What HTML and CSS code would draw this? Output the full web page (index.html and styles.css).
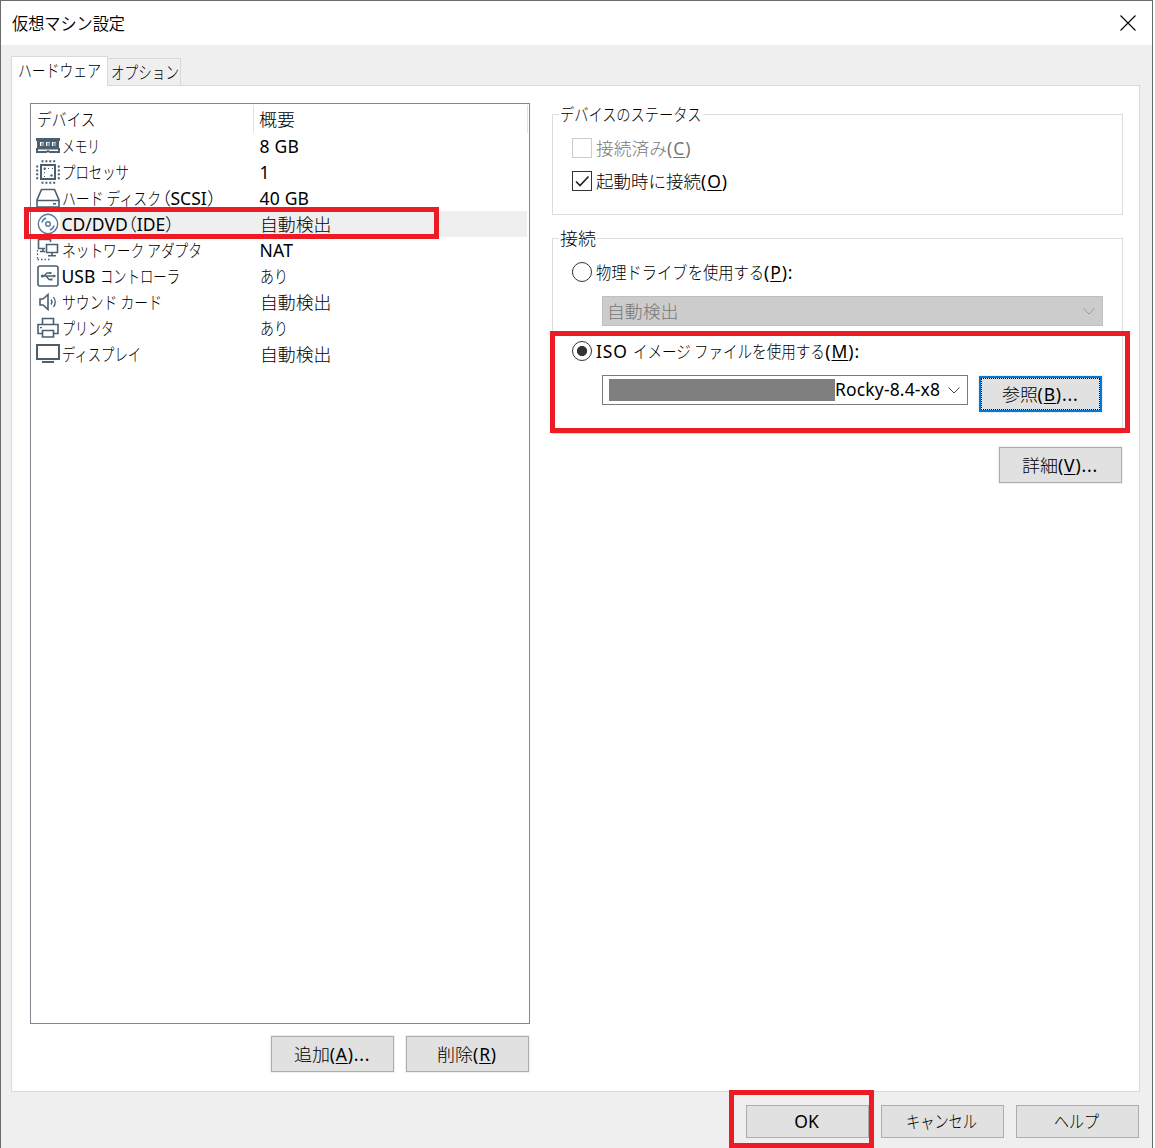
FILE: index.html
```html
<!DOCTYPE html>
<html lang="ja">
<head>
<meta charset="utf-8">
<title>仮想マシン設定</title>
<link rel="stylesheet" href="styles.css">
</head>
<body>
<div class="window">
  <header class="titlebar">
    <h1><span class="fit t-title">仮想マシン設定</span></h1>
    <svg class="close" width="16" height="16" viewBox="0 0 16 16"><path d="M.5 .5l15 15M15.5 .5l-15 15"/></svg>
  </header>

  <nav class="tabs">
    <div class="tab active"><span class="fit t-hw">ハードウェア</span></div>
    <div class="tab"><span class="fit t-opt">オプション</span></div>
  </nav>

  <main class="panel">
    <section class="left">
      <div class="list">
        <div class="row head"><span class="name"><span class="fit t-device">デバイス</span></span><span class="summary"><span class="fit t-two">概要</span></span></div>
        <div class="row">
          <svg class="icon" viewBox="0 0 24 24"><path class="solid" d="M0 4h24v3h-1v7h1v5H0v-5h1V7H0z"/><path class="cut" d="M2 15.500h20V17h-8l-2-1-2 1H2zM4 8h4v4H4zM10 8h4v4h-4zM16 8h4v4h-4zM10.500 19l1.500-1 1.500 1z"/><path class="gray" d="M5 8.500h3V12H5zM11 8.500h3V12h-3zM17 8.500h3V12h-3z"/></svg>
          <span class="name"><span class="fit t-mem">メモリ</span></span><span class="summary">8 GB</span>
        </div>
        <div class="row">
          <svg class="icon" viewBox="0 0 24 24"><path class="line" d="M5 5h14v14H5z"/><path class="dash" d="M5.500 1.200h14M5.500 22.800h14M1.200 5.500v14M22.800 5.500v14"/><circle class="solid" cx="8.700" cy="8.700" r="1.200"/><circle class="solid" cx="15.500" cy="15.500" r="1.200"/><path class="dots" d="M8.500 12v5M12 8.500h5"/></svg>
          <span class="name"><span class="fit t-cpu">プロセッサ</span></span><span class="summary">1</span>
        </div>
        <div class="row">
          <svg class="icon" viewBox="0 0 24 24"><path class="line thin" d="M5.500 3.500h13L23 14v7H1v-7zM1 14.500h22"/><path class="line thin" d="M17 17.800h3"/></svg>
          <span class="name"><span class="fit t-hdd">ハード ディスク</span><span class="fit t-paren">（</span>SCSI<span class="fit t-paren">）</span></span><span class="summary">40 GB</span>
        </div>
        <div class="row selected">
          <svg class="icon disc" viewBox="0 0 24 24"><circle cx="12" cy="12" r="9.700"/><circle cx="12" cy="12" r="2.300"/><path d="M6 10.500a6.500 6.500 0 0 1 4-4.500M18 13.500a6.500 6.500 0 0 1-4 4.500"/></svg>
          <span class="name">CD/DVD<span class="fit t-paren">（</span>IDE<span class="fit t-paren">）</span></span><span class="summary"><span class="fit t-auto">自動検出</span></span>
        </div>
        <div class="row">
          <svg class="icon" viewBox="0 0 24 24"><path class="line thin" d="M2.500 1.500h12v9h-12zM7 10.500v3M4 13.500h6"/><path class="cut" d="M9 4h14v12H9z"/><path class="line thin" d="M10.500 6.500h11v8h-11zM16 14.500v3M12 17.800h8"/><path class="tinydash" d="M1.500 12v9M1.500 21.500h14"/></svg>
          <span class="name"><span class="fit t-net">ネットワーク アダプタ</span></span><span class="summary">NAT</span>
        </div>
        <div class="row">
          <svg class="icon" viewBox="0 0 24 24"><rect class="line thin" x="2" y="2" width="20" height="20" rx="2"/><path class="line fine" d="M6 12h13M8 12l3-3h3M10 12l3 3.500h2"/><circle class="solid" cx="6.300" cy="12" r="1.500"/><path class="solid" d="M17.500 10.200l2.700 1.800-2.700 1.800zM13.500 7.900h2v2h-2zM14.500 14.500h2v2h-2z"/></svg>
          <span class="name">USB <span class="fit t-ctrl">コントローラ</span></span><span class="summary"><span class="fit t-yes">あり</span></span>
        </div>
        <div class="row">
          <svg class="icon" viewBox="0 0 24 24"><path class="line thin" d="M4 9h3l5-4.500v15L7 15H4z"/><path class="line fine" d="M15 9.500q2 2.500 0 5M17.500 7q3.500 5 0 10"/></svg>
          <span class="name"><span class="fit t-snd">サウンド カード</span></span><span class="summary"><span class="fit t-auto">自動検出</span></span>
        </div>
        <div class="row">
          <svg class="icon" viewBox="0 0 24 24"><path class="line thin" d="M6.500 8.500v-6h11v6M6 17.500H2v-9h20v9h-4M6.500 14.500h11V21h-11z"/><path class="solid" d="M4 11h2v1.200H4z"/></svg>
          <span class="name"><span class="fit t-prn">プリンタ</span></span><span class="summary"><span class="fit t-yes">あり</span></span>
        </div>
        <div class="row">
          <svg class="icon" viewBox="0 0 24 24"><path class="line" d="M1 3h22v14H1z"/><path class="solid" d="M6 19h12v2H6z"/></svg>
          <span class="name"><span class="fit t-disp">ディスプレイ</span></span><span class="summary"><span class="fit t-auto">自動検出</span></span>
        </div>
      </div>
      <div class="list-actions">
        <button><span class="fit t-two">追加</span>(<u>A</u>)...</button>
        <button><span class="fit t-two">削除</span>(<u>R</u>)</button>
      </div>
      <div class="mark mark-row"></div>
    </section>

    <section class="right">
      <fieldset class="status">
        <legend><span class="fit t-status">デバイスのステータス</span></legend>
        <label class="option disabled"><span class="box"></span><span class="fit t-conn">接続済み</span>(<u>C</u>)</label>
        <label class="option"><span class="box"><svg width="18" height="18" viewBox="0 0 18 18"><path d="M3 9.500l4 4L15.500 4.500"/></svg></span><span class="fit t-boot">起動時に接続</span>(<u>O</u>)</label>
      </fieldset>
      <fieldset class="connection">
        <legend><span class="fit t-two">接続</span></legend>
        <label class="option"><span class="radio"></span><span class="fit t-phys">物理ドライブを使用する</span>(<u>P</u>):</label>
        <div class="select off"><span class="fit t-auto">自動検出</span><svg class="chevron" width="12" height="7" viewBox="0 0 12 7"><path d="M.5 .5L6 6 11.500 .5"/></svg></div>
        <label class="option second"><span class="radio checked"></span>ISO&nbsp;<span class="fit t-iso">イメージ ファイルを使用する</span>(<u>M</u>):</label>
        <div class="file">
          <div class="select"><span class="redacted"></span><span class="filename">Rocky-8.4-x8</span><svg class="chevron" width="12" height="7" viewBox="0 0 12 7"><path d="M.5 .5L6 6 11.500 .5"/></svg></div>
          <button class="focused"><span class="fit t-two">参照</span>(<u>B</u>)...</button>
        </div>
        <div class="mark mark-iso"></div>
      </fieldset>
      <button class="advanced"><span class="fit t-two">詳細</span>(<u>V</u>)...</button>
    </section>
  </main>

  <footer class="footer">
    <div class="ok"><button>OK</button><div class="mark mark-ok"></div></div>
    <button><span class="fit t-cancel">キャンセル</span></button>
    <button><span class="fit t-help">ヘルプ</span></button>
  </footer>
</div>
</body>
</html>
```
FILE: styles.css
```css
* { box-sizing: border-box; }

body {
  margin: 0;
  width: 1155px;
  height: 1148px;
  overflow: hidden;
  background: #fff;
  color: #000;
  font: 17.5px/26px "Noto Sans", "Noto Sans CJK JP", sans-serif;
}

.window {
  display: flex;
  flex-direction: column;
  width: 1153px;
  height: 1148px;
  border: solid #6b6b6b;
  border-width: 1px 1px 0;
  background: #efefef;
}

/* Japanese text is condensed: --n is its length in ems, --w its width in px */
.fit {
  display: inline-block;
  flex: none;
  width: calc(var(--w) * 1px);
  white-space: nowrap;
  text-align: left;
  font-family: "Noto Sans CJK JP", sans-serif;
  font-weight: 300;
  line-height: 26px;
  letter-spacing: 0;
  vertical-align: top;
  transform: scaleX(calc(var(--w) / (var(--n) * 17.5)));
  transform-origin: 0 50%;
}
.t-title { --n: 7; --w: 113; }
.t-hw { --n: 6; --w: 83; }
.t-opt { --n: 5; --w: 68; }
.t-device { --n: 4; --w: 59; }
.t-two { --n: 2; --w: 36; }
.t-mem { --n: 3; --w: 38; }
.t-cpu { --n: 5; --w: 67; }
.t-hdd { --n: 7.22; --w: 100; }
.t-paren { --n: .5; --w: 9; font-feature-settings: "halt"; }
.t-auto { --n: 4; --w: 71.5; }
.t-net { --n: 10.22; --w: 140; }
.t-ctrl { --n: 6; --w: 80; }
.t-yes { --n: 2; --w: 28; }
.t-snd { --n: 7.22; --w: 100; }
.t-prn { --n: 4; --w: 52; }
.t-disp { --n: 6; --w: 80; }
.t-status { --n: 10; --w: 142; }
.t-conn { --n: 4; --w: 71; }
.t-boot { --n: 6; --w: 105; }
.t-phys { --n: 11; --w: 168; }
.t-iso { --n: 13.22; --w: 192; }
.t-cancel { --n: 5; --w: 71; }
.t-help { --n: 3; --w: 45; }

.titlebar {
  display: flex;
  flex: none;
  align-items: center;
  justify-content: space-between;
  height: 44px;
  padding: 0 16px 0 11px;
  background: #fff;
}
h1 { margin: 0; font-size: inherit; font-weight: 400; }
.titlebar .fit { font-weight: 350; }
.close path { fill: none; stroke: #000; stroke-width: 1.1; }

.tabs {
  display: flex;
  flex: none;
  align-items: flex-end;
  height: 40px;
  padding-left: 10px;
}
.tab {
  height: 27px;
  width: 73px;
  padding-left: 3px;
  border: 1px solid #d9d9d9;
  border-width: 1px 1px 0 0;
  line-height: 26px;
}
.tab.active {
  position: relative;
  z-index: 1;
  width: 97px;
  height: 30px;
  margin-bottom: -1px;
  padding-left: 6px;
  border-left-width: 1px;
  background: #fff;
}

.panel {
  display: flex;
  flex: none;
  gap: 22px;
  width: 1129px;
  height: 1007px;
  margin-left: 10px;
  padding: 17px 16px 0 18px;
  border: 1px solid #d9d9d9;
  background: #fff;
}
.left { position: relative; width: 500px; }
.list {
  height: 921px;
  padding: 1px 0 0 5px;
  border: 1px solid #828790;
}
.row { display: flex; height: 26px; margin-right: 2px; }
.row.head { height: 28px; line-height: 28px; margin-right: 1px; border-right: 1px solid #e2e2e2; }
.row.head .fit { margin-top: 1px; }
.row.head .name { width: 218px; padding-left: 1px; border-right: 1px solid #e2e2e2; }
.row.head .summary { padding-left: 5px; }
.icon { flex: none; width: 24px; height: 24px; margin-top: 1px; }
.name { width: 199px; padding-left: 1.5px; white-space: nowrap; }
.summary { letter-spacing: .2px; padding-left: .5px; }
.selected .name, .selected .summary { background: #efefef; }
.selected .summary { flex: 1; }
.line { fill: none; stroke: #4b5f6e; stroke-width: 2; }
.thin { stroke-width: 1.6; }
.fine { stroke-width: 1.3; }
.solid { fill: #4b5f6e; }
.gray { fill: #8b98a2; }
.cut { fill: #fff; }
.dash { fill: none; stroke: #4b5f6e; stroke-width: 2; stroke-dasharray: 2 1.9; }
.dots { fill: none; stroke: #4b5f6e; stroke-dasharray: 1 3; }
.tinydash { fill: none; stroke: #4b5f6e; stroke-width: 1.3; stroke-dasharray: 1.500 2; }
.disc { fill: none; stroke: #557a9c; stroke-width: 1.4; }

.list-actions { display: flex; justify-content: flex-end; gap: 12px; padding: 12px 1px 0 0; }
button {
  display: flex;
  flex: none;
  align-items: center;
  justify-content: center;
  width: 123px;
  height: 36px;
  padding: 0 1px 0 0;
  border: 1px solid #adadad;
  outline: 1px solid #f0f0f0;
  background: #e1e1e1;
  color: #000;
  font: inherit;
  letter-spacing: .8px;
}
u { text-underline-offset: 2px; text-decoration-thickness: 1px; }

.right { width: 571px; }
fieldset {
  position: relative;
  min-width: 0;
  margin: 0;
  padding: 7px 19px 0;
  border: 1px solid #dcdcdc;
}
legend { height: 22px; margin-left: -13px; padding: 0 1px; line-height: 22px; }
legend .fit { line-height: 22px; }
.status { height: 112px; padding-top: 6px; }
.connection { height: 207px; margin-top: 12px; }
.option { display: flex; align-items: center; height: 33px; letter-spacing: .9px; }
.connection .option { height: 32px; }
.connection .second { margin-top: 9px; }
.disabled { color: #787878; }
.box, .radio { flex: none; width: 20px; height: 20px; margin-right: 4px; border: 1px solid #333; }
.box { margin-top: 1px; }
.box svg { display: block; }
.box path { fill: none; stroke: #222; stroke-width: 1.7; }
.disabled .box { border-color: #ccc; }
.radio { border-radius: 50%; }
.checked { background: radial-gradient(circle, #333 4.7px, #fff 5.4px); }
.select {
  display: flex;
  align-items: center;
  width: 366px;
  height: 30px;
  padding: 0 7px 0 6px;
  border: 1px solid #7a7a7a;
  background: #fff;
}
.off { width: 501px; margin: 8px 0 0 30px; padding-left: 4px; border-color: #bfbfbf; background: #ccc; color: #787878; }
.chevron { margin-left: auto; fill: none; stroke: #444; }
.off .chevron { stroke: #999; }
.redacted { width: 226px; height: 22px; background: #7f7f7f; }
.filename { letter-spacing: .15px; line-height: 24px; padding-bottom: 2px; }
.file { display: flex; gap: 11px; margin: 8px 0 0 30px; }
.file button { margin-top: 1px; }
.focused { position: relative; border: 2px solid #0078d7; }
.focused::after { content: ""; position: absolute; inset: 0; border: 1px dotted #000; }
.advanced { margin: 13px 1px 0 auto; }

.footer { display: flex; gap: 12px; justify-content: flex-end; padding: 13px 13px 0 0; }
.footer button { height: 33px; padding: 0 2px 2px 0; outline: 0; letter-spacing: 0; }
.ok { position: relative; }

/* Red call-out frames laid over the dialog */
.mark { position: absolute; border: 5px solid #ed1c24; pointer-events: none; }
.mark-row { left: -6px; top: 104px; width: 415px; height: 32px; }
.mark-iso { left: -3px; top: 82px; width: 580px; height: 102px; }
.mark-ok { left: -17px; top: -15px; width: 145px; height: 58px; }
```
